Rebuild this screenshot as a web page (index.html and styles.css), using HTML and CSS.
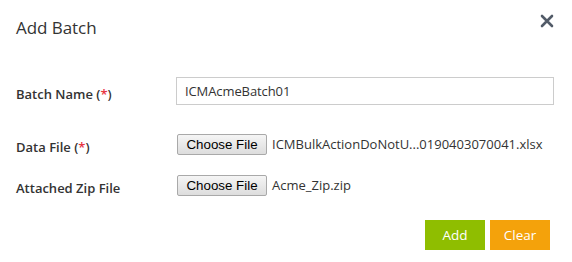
FILE: index.html
```html
<!DOCTYPE html>
<html>
<head>
<meta charset="utf-8">
<link rel="stylesheet" href="styles.css">
</head>
<body>
<div class="dialog">
  <div class="header">
    <h1 class="title">Add Batch</h1>
    <button class="close" aria-label="Close">
      <svg width="14" height="14" viewBox="0 0 14 14"><path d="M2 2 L12 12 M12 2 L2 12" stroke="#525b68" stroke-width="2.6" stroke-linecap="round"/></svg>
    </button>
  </div>
  <div class="form">
    <div class="row row-name">
      <label class="label">Batch Name (<span class="req">*</span>)</label>
      <div class="control"><div class="input">ICMAcmeBatch01</div></div>
    </div>
    <div class="row row-data">
      <label class="label">Data File (<span class="req">*</span>)</label>
      <div class="control file"><button class="choose">Choose File</button><span class="fname">ICMBulkActionDoNotU...0190403070041.xlsx</span></div>
    </div>
    <div class="row row-zip">
      <label class="label">Attached Zip File</label>
      <div class="control file"><button class="choose">Choose File</button><span class="fname">Acme_Zip.zip</span></div>
    </div>
  </div>
  <div class="actions">
    <button class="btn add">Add</button>
    <button class="btn clear">Clear</button>
  </div>
</div>
</body>
</html>
```

FILE: styles.css
```css
html, body {
  margin: 0;
  padding: 0;
  background: #ffffff;
}
body {
  font-family: "Open Sans", "Noto Sans", sans-serif;
  color: #333333;
}
.dialog {
  width: 572px;
  height: 262px;
  box-sizing: border-box;
  padding: 0 18px 0 16px;
}
.header {
  display: flex;
  justify-content: space-between;
  align-items: flex-start;
  height: 66px;
}
.title {
  margin: 16px 0 0 0;
  font-size: 17px;
  font-weight: 400;
  line-height: 24px;
  color: #333333;
  letter-spacing: -0.05px;
}
.close {
  margin: 14px 0 0 0;
  padding: 0;
  border: 0;
  background: none;
  width: 14px;
  height: 14px;
  display: flex;
}
.form {
  display: flex;
  flex-direction: column;
}
.row {
  display: grid;
  grid-template-columns: 160px 1fr;
  align-items: center;
}
.label {
  font-size: 13px;
  font-weight: 600;
  color: #333333;
  padding-top: 6px;
}
.req { color: #e8343f; }
.row-name { margin-top: 11px; }
.row-data { margin-top: 27px; }
.row-zip { margin-top: 17px; }
.input {
  height: 28px;
  box-sizing: border-box;
  border: 1px solid #cccccc;
  padding: 0 8px;
  font-size: 13px;
  line-height: 26px;
  color: #333333;
  letter-spacing: -0.1px;
}
.file {
  display: flex;
  align-items: center;
  padding-left: 1px;
}
.choose {
  font-family: "Liberation Sans", Arial, sans-serif;
  font-size: 13.33px;
  color: #000000;
  height: 21px;
  width: 90px;
  padding: 0;
  box-sizing: border-box;
  border: 1px solid #a9a9a9;
  border-radius: 2px;
  background: linear-gradient(#f5f5f5, #dddddd);
  line-height: 19px;
}
.fname {
  margin-left: 5px;
  font-size: 13px;
  color: #333333;
  letter-spacing: 0;
}
.actions {
  display: flex;
  justify-content: flex-end;
  gap: 5px;
  margin-top: 23px;
  padding-right: 4px;
}
.btn {
  width: 60px;
  height: 30px;
  border: 0;
  padding: 0;
  font-family: "Open Sans", "Noto Sans", sans-serif;
  font-size: 13.5px;
  color: #ffffff;
}
.add { background: #8fbe00; }
.clear { background: #f4a20b; }
```
